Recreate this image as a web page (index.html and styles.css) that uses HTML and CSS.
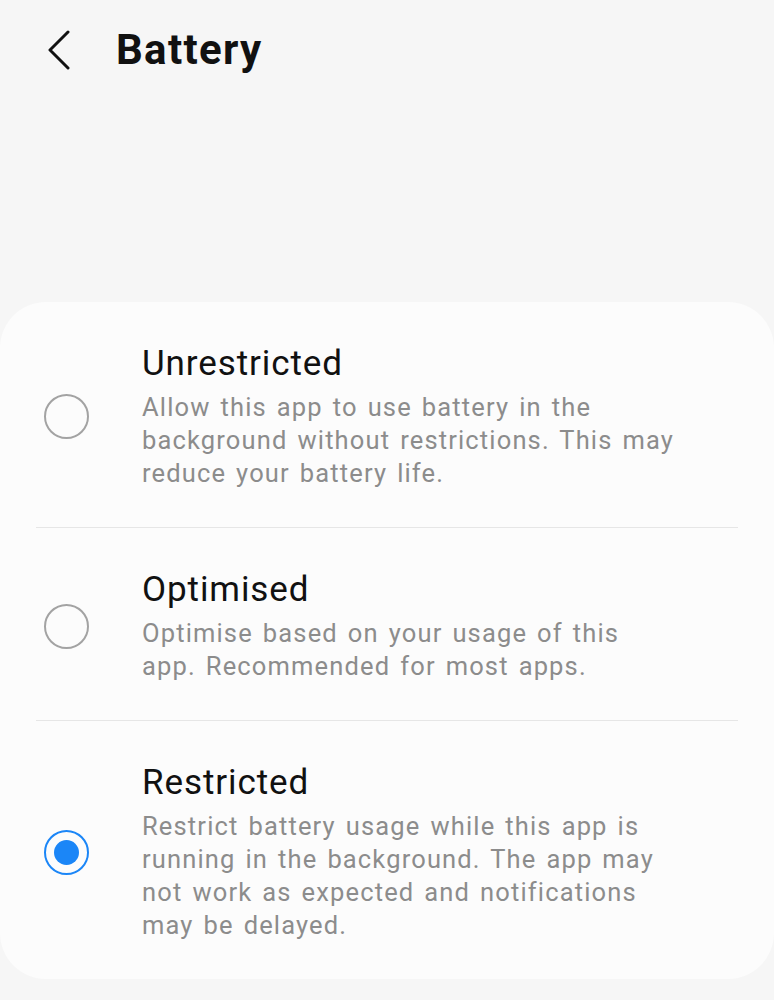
FILE: index.html
```html
<!DOCTYPE html>
<html lang="en">
<head>
  <meta charset="UTF-8" />
  <meta name="viewport" content="width=device-width, initial-scale=1.0"/>
  <title>Battery</title>
  <link rel="stylesheet" href="styles.css">
</head>
<body>
  <div class="header">
    <button class="back" aria-label="Back">
      <svg width="24" height="40" viewBox="0 0 24 40">
        <path d="M21 2 L3 20 L21 38" fill="none" stroke="#111" stroke-width="3" stroke-linecap="round" stroke-linejoin="round"/>
      </svg>
    </button>
    <h1 class="heading">Battery</h1>
  </div>

  <div class="card">
    <label class="option">
      <span class="radio"></span>
      <span class="text">
        <span class="title">Unrestricted</span>
        <span class="desc">Allow this app to use battery in the background without restrictions. This may reduce your battery life.</span>
      </span>
    </label>
    <div class="divider"></div>
    <label class="option">
      <span class="radio"></span>
      <span class="text">
        <span class="title">Optimised</span>
        <span class="desc">Optimise based on your usage of this app. Recommended for most apps.</span>
      </span>
    </label>
    <div class="divider"></div>
    <label class="option">
      <span class="radio checked"></span>
      <span class="text">
        <span class="title">Restricted</span>
        <span class="desc">Restrict battery usage while this app is running in the background. The app may not work as expected and notifications may be delayed.</span>
      </span>
    </label>
  </div>
</body>
</html>
```

FILE: styles.css
```css
* {
  margin: 0;
  padding: 0;
  box-sizing: border-box;
  font-family: Roboto, "Noto Sans", sans-serif;
}

body {
  background: #f6f6f6;
  color: #111;
  width: 774px;
  height: 1000px;
  overflow: hidden;
}

.header {
  display: flex;
  align-items: center;
  height: 100px;
  padding-left: 47px;
}

.back {
  border: none;
  background: transparent;
  width: 24px;
  height: 40px;
  display: flex;
  margin-right: 45px;
}

.heading {
  font-size: 42px;
  font-weight: 700;
  letter-spacing: 1.3px;
  line-height: 1;
  color: #111;
}

.card {
  margin-top: 202px;
  background: #fcfcfc;
  border-radius: 46px;
  padding: 0 36px;
}

.option {
  display: flex;
  align-items: center;
  padding: 41px 0 37px;
}

.radio {
  flex: none;
  width: 45px;
  height: 45px;
  border: 2px solid #a3a3a3;
  border-radius: 50%;
  margin-left: 8px;
  margin-right: 53px;
  display: flex;
  align-items: center;
  justify-content: center;
}

.radio.checked {
  border-color: #1b86f7;
}

.radio.checked::after {
  content: "";
  width: 25px;
  height: 25px;
  border-radius: 50%;
  background: #1b86f7;
}

.text {
  display: flex;
  flex-direction: column;
  max-width: 534px;
}

.title {
  font-size: 35px;
  line-height: 41px;
  letter-spacing: 0.9px;
  color: #111;
}

.desc {
  margin-top: 7px;
  font-size: 25.5px;
  line-height: 33px;
  letter-spacing: 1.15px;
  word-spacing: 2.5px;
  color: #8c8c8c;
}

.divider {
  height: 1px;
  background: #e6e6e6;
}
```
